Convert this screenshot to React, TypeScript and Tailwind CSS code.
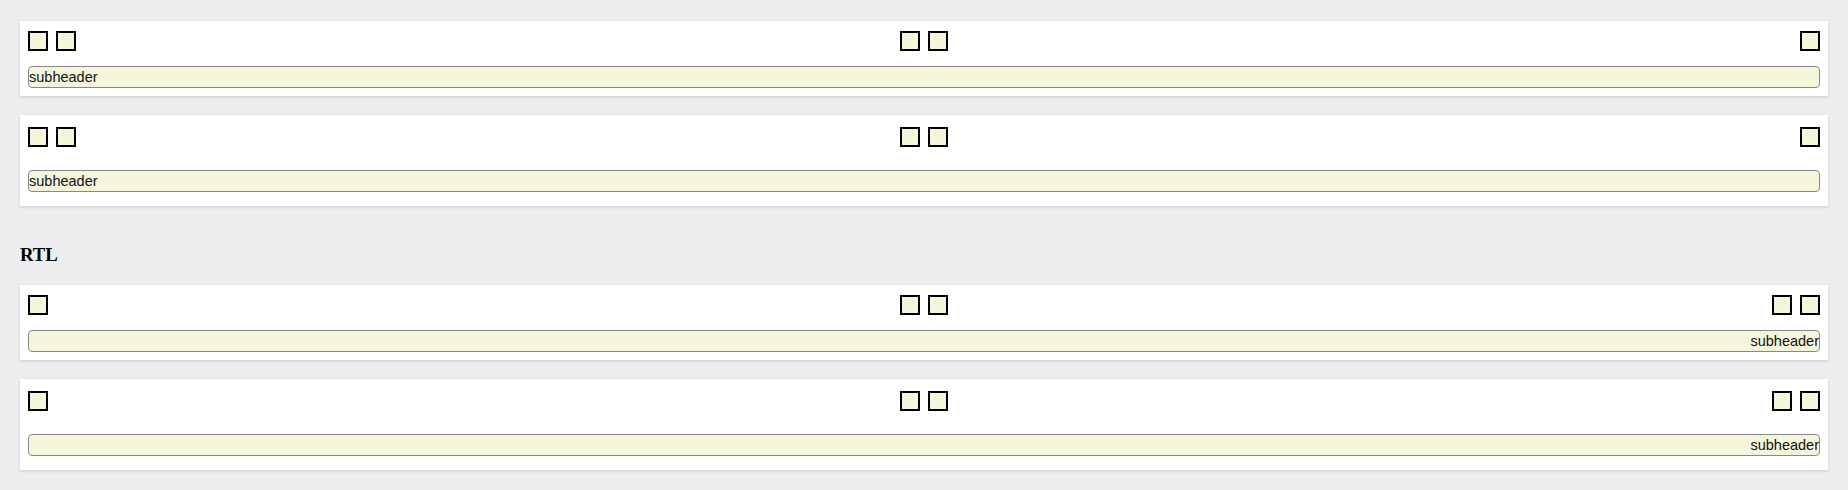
import React from "react";

function Box() {
  return <div className="w-5 h-5 border-2 border-black bg-[#f5f5dc] shrink-0" />;
}

function Card({ tall, rtl }: { tall?: boolean; rtl?: boolean }) {
  return (
    <div
      dir={rtl ? "rtl" : "ltr"}
      className={
        "bg-white shadow-[0_1px_3px_rgba(0,0,0,0.15)] px-2 " +
        (tall ? "pt-3 pb-[14px]" : "pt-[10px] pb-2")
      }
    >
      <div className="flex items-center justify-between h-5">
        <div className="flex gap-2 w-[200px]">
          <Box />
          <Box />
        </div>
        <div className="flex gap-2">
          <Box />
          <Box />
        </div>
        <div className="flex gap-2 w-[200px] justify-end">
          <Box />
        </div>
      </div>
      <div
        className={
          "h-[22px] border border-[#888888] rounded-[4px] bg-[#f5f5dc] text-[14.5px] leading-[20px] text-[#111] " +
          (tall ? "mt-[23px]" : "mt-[15px]")
        }
        style={{ fontFamily: '"Liberation Sans", Arial, sans-serif' }}
      >
        subheader
      </div>
    </div>
  );
}

export default function App() {
  return (
    <div className="min-h-[490px] bg-[#edeef0] px-5 pt-[21px] pb-5 flex flex-col">
      <Card />
      <div className="h-[19px]" />
      <Card tall />
      <h3
        className="mt-[38px] mb-[20px] text-[18.72px] font-bold leading-[21px] text-black"
        style={{ fontFamily: '"Liberation Serif", "Times New Roman", serif' }}
      >
        RTL
      </h3>
      <Card rtl />
      <div className="h-[19px]" />
      <Card rtl tall />
    </div>
  );
}
